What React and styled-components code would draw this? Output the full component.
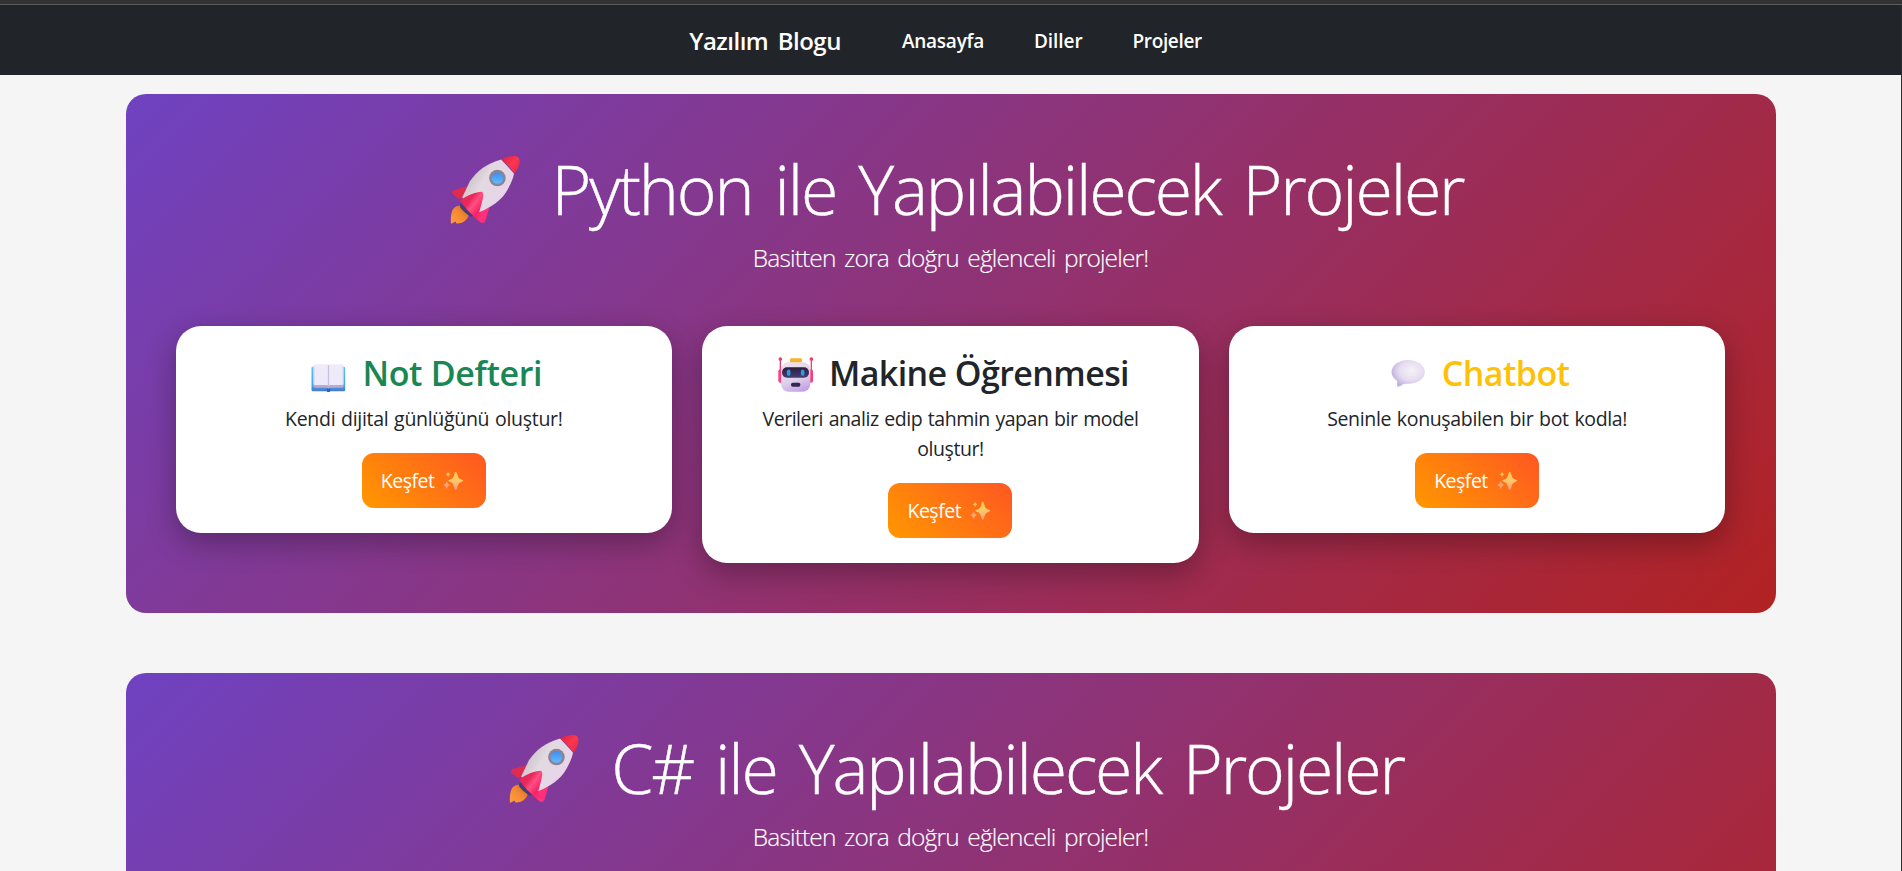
import React from 'react';
import styled, { createGlobalStyle } from 'styled-components';

const GlobalStyle = createGlobalStyle`
  * { box-sizing: border-box; }
  body {
    margin: 0;
    background: #f5f5f5;
    color: #212529;
    font-family: "Open Sans", "Noto Sans", sans-serif;
    overflow: hidden;
  }
  svg { display: block; flex: none; }
`;

const Page = styled.div`
  height: 871px;
  overflow: hidden;
  display: flex;
  flex-direction: column;
`;

const TopStrip = styled.div`
  flex: none;
  height: 5px;
  background: #333333;
  border-bottom: 1px solid #5c5c5c;
`;

const Content = styled.div`
  flex: 1;
  min-height: 0;
  overflow: hidden;
  border-right: 1px solid #2b2d30;
`;

const Navbar = styled.nav`
  height: 70px;
  padding: 1px 10px 0 0;
  display: flex;
  align-items: center;
  justify-content: center;
  background: #212529;
`;

const Brand = styled.a`
  margin-right: 61px;
  color: #fff;
  font-size: 24px;
  font-weight: 600;
  line-height: 32px;
  letter-spacing: -0.5px;
  word-spacing: 3.7px;
`;

const NavList = styled.div`
  display: flex;
  gap: 50px;
  padding-top: 1px;
`;

const NavLink = styled.a`
  color: #fff;
  font-size: 19px;
  font-weight: 600;
  letter-spacing: ${p => p.$tracking}px;
`;

const Main = styled.main`
  display: flex;
  flex-direction: column;
  align-items: center;
  gap: 60px;
  padding-top: 19px;
`;

const Hero = styled.section`
  flex: none;
  width: 1650px;
  height: 519px;
  padding: 53px 50px 0;
  border-radius: 20px;
  background: linear-gradient(135deg, #6f42c1, #b22222);
`;

const HeroTitle = styled.h1`
  height: 84px;
  margin: 0;
  padding-left: 12px;
  display: flex;
  align-items: center;
  justify-content: center;
  gap: 32px;
  color: #fff;
  font-size: 68px;
  font-weight: 300;
  line-height: 84px;
  letter-spacing: -2.15px;
  word-spacing: 6.5px;
  white-space: nowrap;
  -webkit-text-stroke: 0.4px #fff;
`;

const HeroLead = styled.p`
  margin: 8px 0 49px;
  color: #fff;
  font-size: 24.5px;
  font-weight: 300;
  line-height: 38px;
  letter-spacing: -0.85px;
  word-spacing: 3px;
  text-align: center;
  -webkit-text-stroke: 0.15px #fff;
`;

const CardGrid = styled.div`
  display: grid;
  grid-template-columns: repeat(3, 1fr);
  align-items: start;
  gap: 30px;
`;

const Card = styled.article`
  padding: 25px;
  display: flex;
  flex-direction: column;
  align-items: center;
  border-radius: 25px;
  background: #fff;
  box-shadow: 0 10px 30px rgba(0, 0, 0, 0.3);
`;

const CardTitle = styled.h3`
  height: 43px;
  margin: 0;
  padding-left: 6px;
  display: flex;
  align-items: center;
  gap: 16px;
  color: ${p => p.$color};
  font-size: 34px;
  font-weight: 600;
  line-height: 43px;
  letter-spacing: ${p => p.$tracking}px;
  white-space: nowrap;

  svg { margin-top: 3px; }
  span { padding-top: 2px; }
`;

const CardText = styled.p`
  max-width: 430px;
  margin: 10px 0 19px;
  font-size: 19.5px;
  line-height: 30px;
  letter-spacing: ${p => p.$tracking}px;
  word-spacing: 1px;
  text-align: center;
`;

const ExploreButton = styled.button`
  width: 124px;
  height: 55px;
  padding: 0 0 0 19px;
  display: flex;
  align-items: center;
  gap: 9px;
  border: 0;
  border-radius: 12px;
  background: linear-gradient(45deg, #ff9800, #ff5722);
  color: #fff;
  font: 400 19.5px/30px "Open Sans", "Noto Sans", sans-serif;
  letter-spacing: -0.5px;
`;

const Rocket = () => (
  <svg width="70" height="69" viewBox="28 31 211 207" aria-hidden="true">
    <defs>
      <linearGradient id="rkBody" x1="0" y1="0.2" x2="1" y2="0.8">
        <stop offset="0" stopColor="#bfb5bd" />
        <stop offset="0.4" stopColor="#e2d9e1" />
        <stop offset="1" stopColor="#ead2ec" />
      </linearGradient>
      <linearGradient id="rkNose" x1="0" y1="0" x2="1" y2="1">
        <stop offset="0" stopColor="#d91f3e" />
        <stop offset="0.5" stopColor="#fb3650" />
        <stop offset="1" stopColor="#e02a48" />
      </linearGradient>
      <linearGradient id="rkFin" x1="0" y1="0" x2="1" y2="1">
        <stop offset="0" stopColor="#e8264e" />
        <stop offset="0.35" stopColor="#e8285c" />
        <stop offset="0.5" stopColor="#ff4f82" />
        <stop offset="0.7" stopColor="#f52467" />
        <stop offset="1" stopColor="#ff3b84" />
      </linearGradient>
      <linearGradient id="rkFlame" x1="0" y1="1" x2="1" y2="0">
        <stop offset="0" stopColor="#ff9f3e" />
        <stop offset="0.5" stopColor="#f58a33" />
        <stop offset="1" stopColor="#c9682b" />
      </linearGradient>
      <linearGradient id="rkGlass" x1="0" y1="0" x2="0" y2="1">
        <stop offset="0" stopColor="#3c8df0" />
        <stop offset="1" stopColor="#64baff" />
      </linearGradient>
    </defs>
    <path d="M42 189C31 198 30 218 31 237C37 238 41 231 46 232C47 235 45 237 49 237C62 238 82 228 85 210L62 184C53 183 47 185 42 189Z" fill="url(#rkFlame)" />
    <path d="M60 175L104 210L92 217C82 212 66 199 58 187Z" fill="#443d79" />
    <path d="M35 147C32 139 38 136 47 134L82 125L67 159L56 164Z" fill="#df2b50" />
    <path d="M148 184L135 228C132 237 126 237 120 233L92 207Z" fill="#ff2f7a" />
    <path d="M182 44C139 56 108 79 88 110L65 158C77 178 97 195 117 202C151 189 184 167 201 136C210 119 218 103 221 86Z" fill="url(#rkBody)" />
    <path d="M182 44C201 33 224 30 233 37C241 45 239 67 221 87C211 68 196 55 182 44Z" fill="url(#rkNose)" />
    <path d="M58 168C79 152 105 141 124 141C132 145 129 158 116 203L128 235C120 234 113 228 107 221C90 208 72 190 58 168Z" fill="url(#rkFin)" />
    <circle cx="171" cy="100" r="25" fill="#8c8394" />
    <circle cx="171" cy="100" r="17.5" fill="url(#rkGlass)" />
  </svg>
);

const BookIcon = () => (
  <svg width="35" height="35" viewBox="36 34 104 105" aria-hidden="true">
    <defs>
      <linearGradient id="bkCover" x1="0" y1="0" x2="0" y2="1">
        <stop offset="0" stopColor="#5cc4f5" />
        <stop offset="0.8" stopColor="#36a5ee" />
        <stop offset="1" stopColor="#5670c9" />
      </linearGradient>
      <linearGradient id="bkPage" x1="0" y1="0" x2="0" y2="1">
        <stop offset="0" stopColor="#f1ebf8" />
        <stop offset="1" stopColor="#ece9fa" />
      </linearGradient>
    </defs>
    <rect x="37" y="63" width="101" height="74" rx="4" fill="url(#bkCover)" />
    <rect x="83" y="127" width="10" height="12" rx="3" fill="#2866b0" />
    <path d="M43 110H133V122Q133 126 128 126H94L88 129L82 126H48Q43 126 43 122Z" fill="#b9a9d3" />
    <path d="M43 60Q43 56 48 56H83Q88 56 88 60V121Q88 118 83 118H48Q43 118 43 114Z" fill="url(#bkPage)" />
    <path d="M133 60Q133 56 128 56H93Q88 56 88 60V121Q88 118 93 118H128Q133 118 133 114Z" fill="url(#bkPage)" />
    <path d="M86 58H90V121H86Z" fill="#cbbfe0" />
    <path d="M43 62H46V117H43ZM130 62H133V117H130Z" fill="#d9cfea" />
  </svg>
);

const RobotIcon = () => (
  <svg width="35" height="35" viewBox="24 34 105 105" aria-hidden="true">
    <defs>
      <linearGradient id="rbHead" x1="0.2" y1="0" x2="0.6" y2="1">
        <stop offset="0" stopColor="#eee3ee" />
        <stop offset="0.6" stopColor="#dfd0ea" />
        <stop offset="1" stopColor="#c5a3e6" />
      </linearGradient>
      <linearGradient id="rbVisor" x1="0" y1="0" x2="0" y2="1">
        <stop offset="0" stopColor="#2b1e40" />
        <stop offset="1" stopColor="#453d70" />
      </linearGradient>
    </defs>
    <path d="M31 40V75M124 40V75" stroke="#ee3f70" strokeWidth="4" />
    <circle cx="31" cy="40" r="5.5" fill="#f53a68" />
    <circle cx="124" cy="40" r="5.5" fill="#f53a68" />
    <rect x="25" y="71" width="20" height="40" rx="6" fill="#ff3d7a" />
    <rect x="109" y="71" width="20" height="40" rx="6" fill="#ff3d7a" />
    <rect x="33" y="49" width="88" height="89" rx="23" fill="url(#rbHead)" />
    <rect x="60" y="38" width="36" height="12" rx="4" fill="#f4b32f" />
    <rect x="36" y="65" width="81" height="31" rx="15" fill="url(#rbVisor)" />
    <ellipse cx="56" cy="81" rx="5.5" ry="9.5" fill="#2c9ae4" />
    <ellipse cx="98" cy="81" rx="5.5" ry="9.5" fill="#2c9ae4" />
    <rect x="63" y="111" width="28" height="12" rx="5" fill="#35264f" />
  </svg>
);

const BubbleIcon = () => (
  <svg width="35" height="35" viewBox="36 34 104 105" aria-hidden="true">
    <defs>
      <radialGradient id="bbFill" cx="0.6" cy="0.4" r="0.62">
        <stop offset="0" stopColor="#f5f1f8" />
        <stop offset="0.6" stopColor="#e6dcf0" />
        <stop offset="1" stopColor="#c1b0df" />
      </radialGradient>
    </defs>
    <path d="M87 43C116 43 137 60 137 79C137 99 116 114 87 114C79 114 73 113 68 118C64 121 59 124 54 123V106C43 98 37 90 37 79C37 60 58 43 87 43Z" fill="url(#bbFill)" />
  </svg>
);

const SparkleIcon = () => (
  <svg width="20.5" height="19" viewBox="838 484 61 57" aria-hidden="true">
    <defs>
      <linearGradient id="spFill" x1="0" y1="0" x2="0" y2="1">
        <stop offset="0" stopColor="#ffca4d" />
        <stop offset="0.5" stopColor="#fcc86a" />
        <stop offset="1" stopColor="#f79a7d" />
      </linearGradient>
    </defs>
    <path d="M876 486C878 486 879 488 880 492C883 504 886 507 894 510C900 512 900 514 894 516C886 519 883 523 880 534C879 538 878 540 876 540C874 540 873 538 872 534C869 523 866 519 858 516C852 514 852 512 858 510C866 507 869 504 872 492C873 488 874 486 876 486Z" fill="url(#spFill)" />
    <path d="M853 486C855 491 856 492 861 494C856 496 855 497 853 502C851 497 850 496 845 494C850 492 851 491 853 486Z" fill="#ffc35a" />
    <path d="M849 514C852 522 853 523 860 526C853 529 852 530 849 539C846 530 845 529 838 526C845 523 846 522 849 514Z" fill="#fba474" />
  </svg>
);

const pythonProjects = [
  { title: 'Not Defteri', color: '#198754', titleTracking: -0.35, Icon: BookIcon, text: 'Kendi dijital günlüğünü oluştur!', textTracking: -0.3 },
  { title: 'Makine Öğrenmesi', color: '#212529', titleTracking: -0.6, Icon: RobotIcon, text: 'Verileri analiz edip tahmin yapan bir model oluştur!', textTracking: -0.45 },
  { title: 'Chatbot', color: '#ffc107', titleTracking: -0.57, Icon: BubbleIcon, text: 'Seninle konuşabilen bir bot kodla!', textTracking: -0.34 },
];

function ProjectCard({ project }) {
  const { Icon } = project;
  return (
    <Card>
      <CardTitle $color={project.color} $tracking={project.titleTracking}>
        <Icon />
        <span>{project.title}</span>
      </CardTitle>
      <CardText $tracking={project.textTracking}>{project.text}</CardText>
      <ExploreButton>
        <span>Keşfet</span>
        <SparkleIcon />
      </ExploreButton>
    </Card>
  );
}

function ProjectSection({ title, projects }) {
  return (
    <Hero>
      <HeroTitle>
        <Rocket />
        <span>{title}</span>
      </HeroTitle>
      <HeroLead>Basitten zora doğru eğlenceli projeler!</HeroLead>
      {projects && (
        <CardGrid>
          {projects.map(p => <ProjectCard key={p.title} project={p} />)}
        </CardGrid>
      )}
    </Hero>
  );
}

export default function App() {
  return (
    <Page>
      <GlobalStyle />
      <TopStrip />
      <Content>
        <Navbar>
          <Brand>Yazılım Blogu</Brand>
          <NavList>
            <NavLink $tracking={-0.24}>Anasayfa</NavLink>
            <NavLink $tracking={-0.07}>Diller</NavLink>
            <NavLink $tracking={-0.36}>Projeler</NavLink>
          </NavList>
        </Navbar>
        <Main>
          <ProjectSection title="Python ile Yapılabilecek Projeler" projects={pythonProjects} />
          <ProjectSection title="C# ile Yapılabilecek Projeler" />
        </Main>
      </Content>
    </Page>
  );
}
